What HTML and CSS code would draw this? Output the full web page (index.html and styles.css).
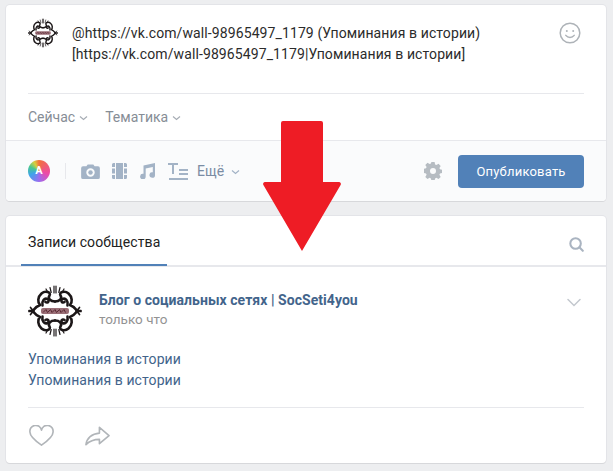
FILE: index.html
```html
<!DOCTYPE html>
<html lang="ru">
<head>
<meta charset="utf-8">
<title>Блог о социальных сетях</title>
<link rel="stylesheet" href="styles.css">
</head>
<body>
<svg class="defs" width="0" height="0" aria-hidden="true">
  <defs>
    <g id="quad" fill="none" stroke="#1c1718" stroke-linecap="round" stroke-linejoin="round">
      <path stroke-width="2.600" d="M27 17.500C22.500 17.500 19.500 14.500 21.500 11.500C23.500 8.500 17.500 6 13.500 9.500C9.500 13 9.500 18.500 12 21C9.500 22 7.500 23.500 6 25.500"/>
      <path stroke-width="2.600" d="M14.500 21.500C13.500 17 16.500 13.500 19.500 15C22 16.500 19.800 19.800 17.500 18"/>
      <path stroke-width="1.200" d="M26 2v7M22 3.500l1.200 5M18 5l2 3.500"/>
      <path stroke-width="1.700" d="M1 26.500h5M2.500 23.500l2.500 3"/>
    </g>
    <symbol id="logo" viewBox="0 0 54 54">
      <use href="#quad"/>
      <use href="#quad" transform="matrix(-1 0 0 1 54 0)"/>
      <use href="#quad" transform="matrix(1 0 0 -1 0 54)"/>
      <use href="#quad" transform="matrix(-1 0 0 -1 54 54)"/>
      <rect x="13" y="24" width="28" height="6" rx="2" fill="#9a6f77"/>
      <path d="M15 28.500l3-3 1.500 3 3-3 1.500 3 3-3 1.500 3 3-3 1.500 3 3-3 1.500 3" fill="none" stroke="#5a2a34" stroke-width="1"/>
    </symbol>
  </defs>
</svg>

<main class="page">
  <section class="card composer">
    <div class="draft">
      <svg class="avatar-small"><use href="#logo"/></svg>
      <div class="draft-text">@https://vk.com/wall-98965497_1179 (Упоминания в истории)<br>[https://vk.com/wall-98965497_1179|Упоминания в истории]</div>
      <svg class="smile" viewBox="0 0 22 22" fill="none" stroke="#aeb3b8" stroke-width="1.500" stroke-linecap="round">
        <circle cx="11" cy="11" r="9.800"/>
        <circle cx="7.800" cy="9" r="1" fill="#aeb3b8" stroke="none"/>
        <circle cx="14.200" cy="9" r="1" fill="#aeb3b8" stroke="none"/>
        <path d="M6.800 13.400c2.200 2.800 6.200 2.800 8.400 0"/>
      </svg>
    </div>
    <div class="options">
      <span class="option">Сейчас<svg class="caret" viewBox="0 0 9 6"><path d="M1 1.500l3.500 3 3.500-3"/></svg></span>
      <span class="option">Тематика<svg class="caret" viewBox="0 0 9 6"><path d="M1 1.500l3.500 3 3.500-3"/></svg></span>
    </div>
    <div class="toolbar">
      <span class="color-badge">A</span>
      <span class="tool-sep"></span>
      <svg class="tool tool-camera" viewBox="0 0 20 16"><path fill-rule="evenodd" d="M2 2.500h3.600L7 .5h6l1.400 2H18a2 2 0 0 1 2 2V14a2 2 0 0 1-2 2H2a2 2 0 0 1-2-2V4.500a2 2 0 0 1 2-2zM10 4.500a4.500 4.500 0 1 0 0 9 4.500 4.500 0 0 0 0-9z"/><circle cx="10" cy="9" r="2.400"/></svg>
      <svg class="tool tool-film" viewBox="0 0 15 16"><path d="M4 0h7v16H4zM0 1.500A1.500 1.500 0 0 1 1.500 0H3v4H0zM0 5.500h3v5H0zM0 12h3v4H1.500A1.500 1.500 0 0 1 0 14.500zM12 0h1.500A1.500 1.500 0 0 1 15 1.500V4h-3zM12 5.500h3v5h-3zM12 12h3v2.500a1.500 1.500 0 0 1-1.500 1.500H12z"/></svg>
      <svg class="tool tool-music" viewBox="0 0 16 16"><path d="M4.500 2.500L16 0v12a2.800 2.800 0 1 1-2.200-2.700V4L6.700 5.500v8A2.800 2.800 0 1 1 4.500 10.800z"/></svg>
      <svg class="tool tool-text" viewBox="0 0 20 17"><path d="M0 0h10v2H6v9H4V2H0zM11 6h9v2h-9zM11 10h9v2h-9zM1 15h19v2H1z"/></svg>
      <span class="more">Ещё<svg class="caret caret-more" viewBox="0 0 9 6"><path d="M1 1.500l3.500 3 3.500-3"/></svg></span>
      <svg class="gear" viewBox="0 0 18 18"><path fill-rule="evenodd" d="M7.400 0h3.200l.5 2.400 1.300.6 2.100-1.300 2.200 2.200-1.300 2.100.6 1.300 2 .5v3.200l-2 .5-.6 1.300 1.300 2.100-2.200 2.200-2.100-1.300-1.300.6-.5 2.400H7.400l-.5-2.400-1.300-.6-2.100 1.300-2.200-2.200 1.300-2.100-.6-1.300-2-.5V6.800l2-.5.6-1.300-1.300-2.100 2.200-2.200 2.100 1.300 1.300-.6zM9 6a3 3 0 1 0 0 6 3 3 0 0 0 0-6z"/></svg>
      <button class="publish" type="button">Опубликовать</button>
    </div>
  </section>

  <section class="card wall">
    <div class="tabs">
      <span class="tab">Записи сообщества</span>
      <svg class="search" viewBox="0 0 16 16" fill="none" stroke="#aab4c1" stroke-width="2.200" stroke-linecap="round"><circle cx="7" cy="7" r="5.600"/><path d="M11.300 11.300l3.400 3.400"/></svg>
    </div>
    <article class="post">
      <header class="post-head">
        <svg class="avatar"><use href="#logo"/></svg>
        <div class="post-meta">
          <a class="author">Блог о социальных сетях | SocSeti4you</a>
          <span class="time">только что</span>
        </div>
        <svg class="post-menu" viewBox="0 0 14 9" fill="none" stroke="#c3c8ce" stroke-width="1.500" stroke-linecap="round"><path d="M1 1.500l6 6 6-6"/></svg>
      </header>
      <div class="post-text">Упоминания в истории<br>Упоминания в истории</div>
      <footer class="post-actions">
        <svg class="like" viewBox="0 0 26 22" fill="none" stroke="#b1b5b9" stroke-width="1.700" stroke-linejoin="round"><path d="M13 20.500C6 15.500 1 11.500 1 7a5.800 5.800 0 0 1 12-2 5.800 5.800 0 0 1 12 2c0 4.500-5 8.500-12 13.500z"/></svg>
        <svg class="share" viewBox="0 0 26 20" fill="none" stroke="#b1b5b9" stroke-width="1.700" stroke-linejoin="round"><path d="M15 1l10 8.500L15 18v-4.500C9 13.500 5 15 1 19c.8-6.500 6-11.500 14-12z"/></svg>
      </footer>
    </article>
  </section>

  <svg class="arrow" viewBox="0 0 78 130"><path d="M20 0h38a2 2 0 0 1 2 2v59h16a2 2 0 0 1 1.600 3L39 130 .4 64A2 2 0 0 1 2 61h16V2a2 2 0 0 1 2-2z"/></svg>
</main>
</body>
</html>
```

FILE: styles.css
```css
* { box-sizing: border-box; }

html, body {
  margin: 0;
  height: 100%;
}

body {
  background: #edeef0;
  font-family: Roboto, "Noto Sans", sans-serif;
  font-size: 14px;
  color: #222;
  overflow: hidden;
}

.defs { position: absolute; }

.page {
  position: relative;
  width: 613px;
  height: 471px;
  padding: 5px 7px 0 6px;
  display: flex;
  flex-direction: column;
  gap: 15px;
}

.card {
  background: #fff;
  border-radius: 4px;
  box-shadow: 0 1px 0 0 #d7d8db, 0 0 0 1px #e3e4e8;
}

/* composer */
.composer {
  height: 196px;
  display: flex;
  flex-direction: column;
  overflow: hidden;
}

.draft {
  height: 89px;
  margin: 0 22px;
  padding-top: 13px;
  display: flex;
  align-items: flex-start;
  border-bottom: 1px solid #e7e8ec;
}

.avatar-small {
  width: 30px;
  height: 30px;
  flex: none;
}

.draft-text {
  flex: 1;
  margin-left: 14px;
  padding-top: 5px;
  line-height: 21px;
  letter-spacing: 0.1px;
  color: #2b2b2b;
}

.smile {
  width: 22px;
  height: 22px;
  flex: none;
  margin: 4px 3px 0 0;
}

.options {
  height: 46px;
  margin: 0 22px;
  display: flex;
  align-items: center;
  gap: 17px;
  color: #868d96;
}

.option {
  display: inline-flex;
  align-items: center;
  gap: 4px;
}

.caret {
  width: 9px;
  height: 6px;
  margin-top: 2px;
  fill: none;
  stroke: #a7adb5;
  stroke-width: 1.200;
}

.toolbar {
  flex: 1;
  display: flex;
  align-items: center;
  padding: 0 22px;
  background: #fafbfc;
  border-top: 1px solid #e7e8ec;
}

.color-badge {
  width: 22px;
  height: 22px;
  border-radius: 50%;
  background: conic-gradient(#f2703d, #ec4aa8 30%, #9b6cf0 50%, #3fa3ec 68%, #49c78f 82%, #d9cf3c 92%, #f2703d);
  color: #fff;
  font-weight: 700;
  font-size: 11px;
  line-height: 22px;
  text-align: center;
  flex: none;
}

.tool-sep {
  width: 1px;
  height: 16px;
  margin: 0 15px;
  background: #e7e8ec;
}

.tool {
  fill: #a3b3c6;
  flex: none;
}

.tool-camera { width: 19px; height: 15px; margin-right: 12px; }
.tool-film { width: 15px; height: 16px; margin-right: 12px; }
.tool-music { width: 16px; height: 16px; margin-right: 13px; }
.tool-text { width: 20px; height: 17px; margin-right: 9px; }

.more {
  display: inline-flex;
  align-items: center;
  gap: 7px;
  color: #7a8ca3;
}

.caret-more { stroke: #a3b3c6; }

.gear {
  width: 18px;
  height: 18px;
  margin-left: auto;
  margin-right: 16px;
  fill: #b6bcc2;
  flex: none;
}

.publish {
  width: 126px;
  height: 33px;
  border: 0;
  border-radius: 4px;
  background: #5181b8;
  color: #fff;
  font: 13px Roboto, sans-serif;
  letter-spacing: 0.2px;
}

/* wall */
.wall {
  height: 247px;
  display: flex;
  flex-direction: column;
}

.tabs {
  height: 51px;
  flex: none;
  padding: 0 22px 0 15px;
  display: flex;
  align-items: stretch;
  justify-content: space-between;
  border-bottom: 2px solid #e7e8ec;
}

.tab {
  width: 146px;
  margin-bottom: -1px;
  padding: 18px 0 0 7px;
  color: #222;
  letter-spacing: 0.1px;
  border-bottom: 2px solid #5181b8;
}

.search {
  width: 15px;
  height: 15px;
  margin-top: 21px;
}

.post {
  flex: 1;
  padding: 0 22px;
  display: flex;
  flex-direction: column;
}

.post-head {
  height: 57px;
  margin-top: 17px;
  display: flex;
  align-items: flex-start;
}

.avatar {
  width: 54px;
  height: 54px;
  flex: none;
}

.post-meta {
  flex: 1;
  margin-left: 17px;
  padding-top: 8px;
  display: flex;
  flex-direction: column;
  gap: 3px;
}

.author {
  color: #42648b;
  font-weight: 700;
  letter-spacing: 0.05px;
  line-height: 17px;
}

.time {
  color: #939393;
  font-size: 13.500px;
  line-height: 15px;
}

.post-menu {
  width: 14px;
  height: 9px;
  margin: 14px 3px 0 0;
}

.post-text {
  margin-top: 8px;
  padding-bottom: 16px;
  line-height: 21px;
  color: #42648b;
  letter-spacing: 0.1px;
  border-bottom: 1px solid #e7e8ec;
}

.post-actions {
  flex: 1;
  display: flex;
  align-items: center;
  gap: 31px;
  padding-left: 1px;
}

.like { width: 25px; height: 22px; }
.share { width: 25px; height: 20px; }

/* annotation arrow drawn over the page */
.arrow {
  position: absolute;
  left: 263px;
  top: 121px;
  width: 78px;
  height: 130px;
  fill: #ee1c25;
}
```
